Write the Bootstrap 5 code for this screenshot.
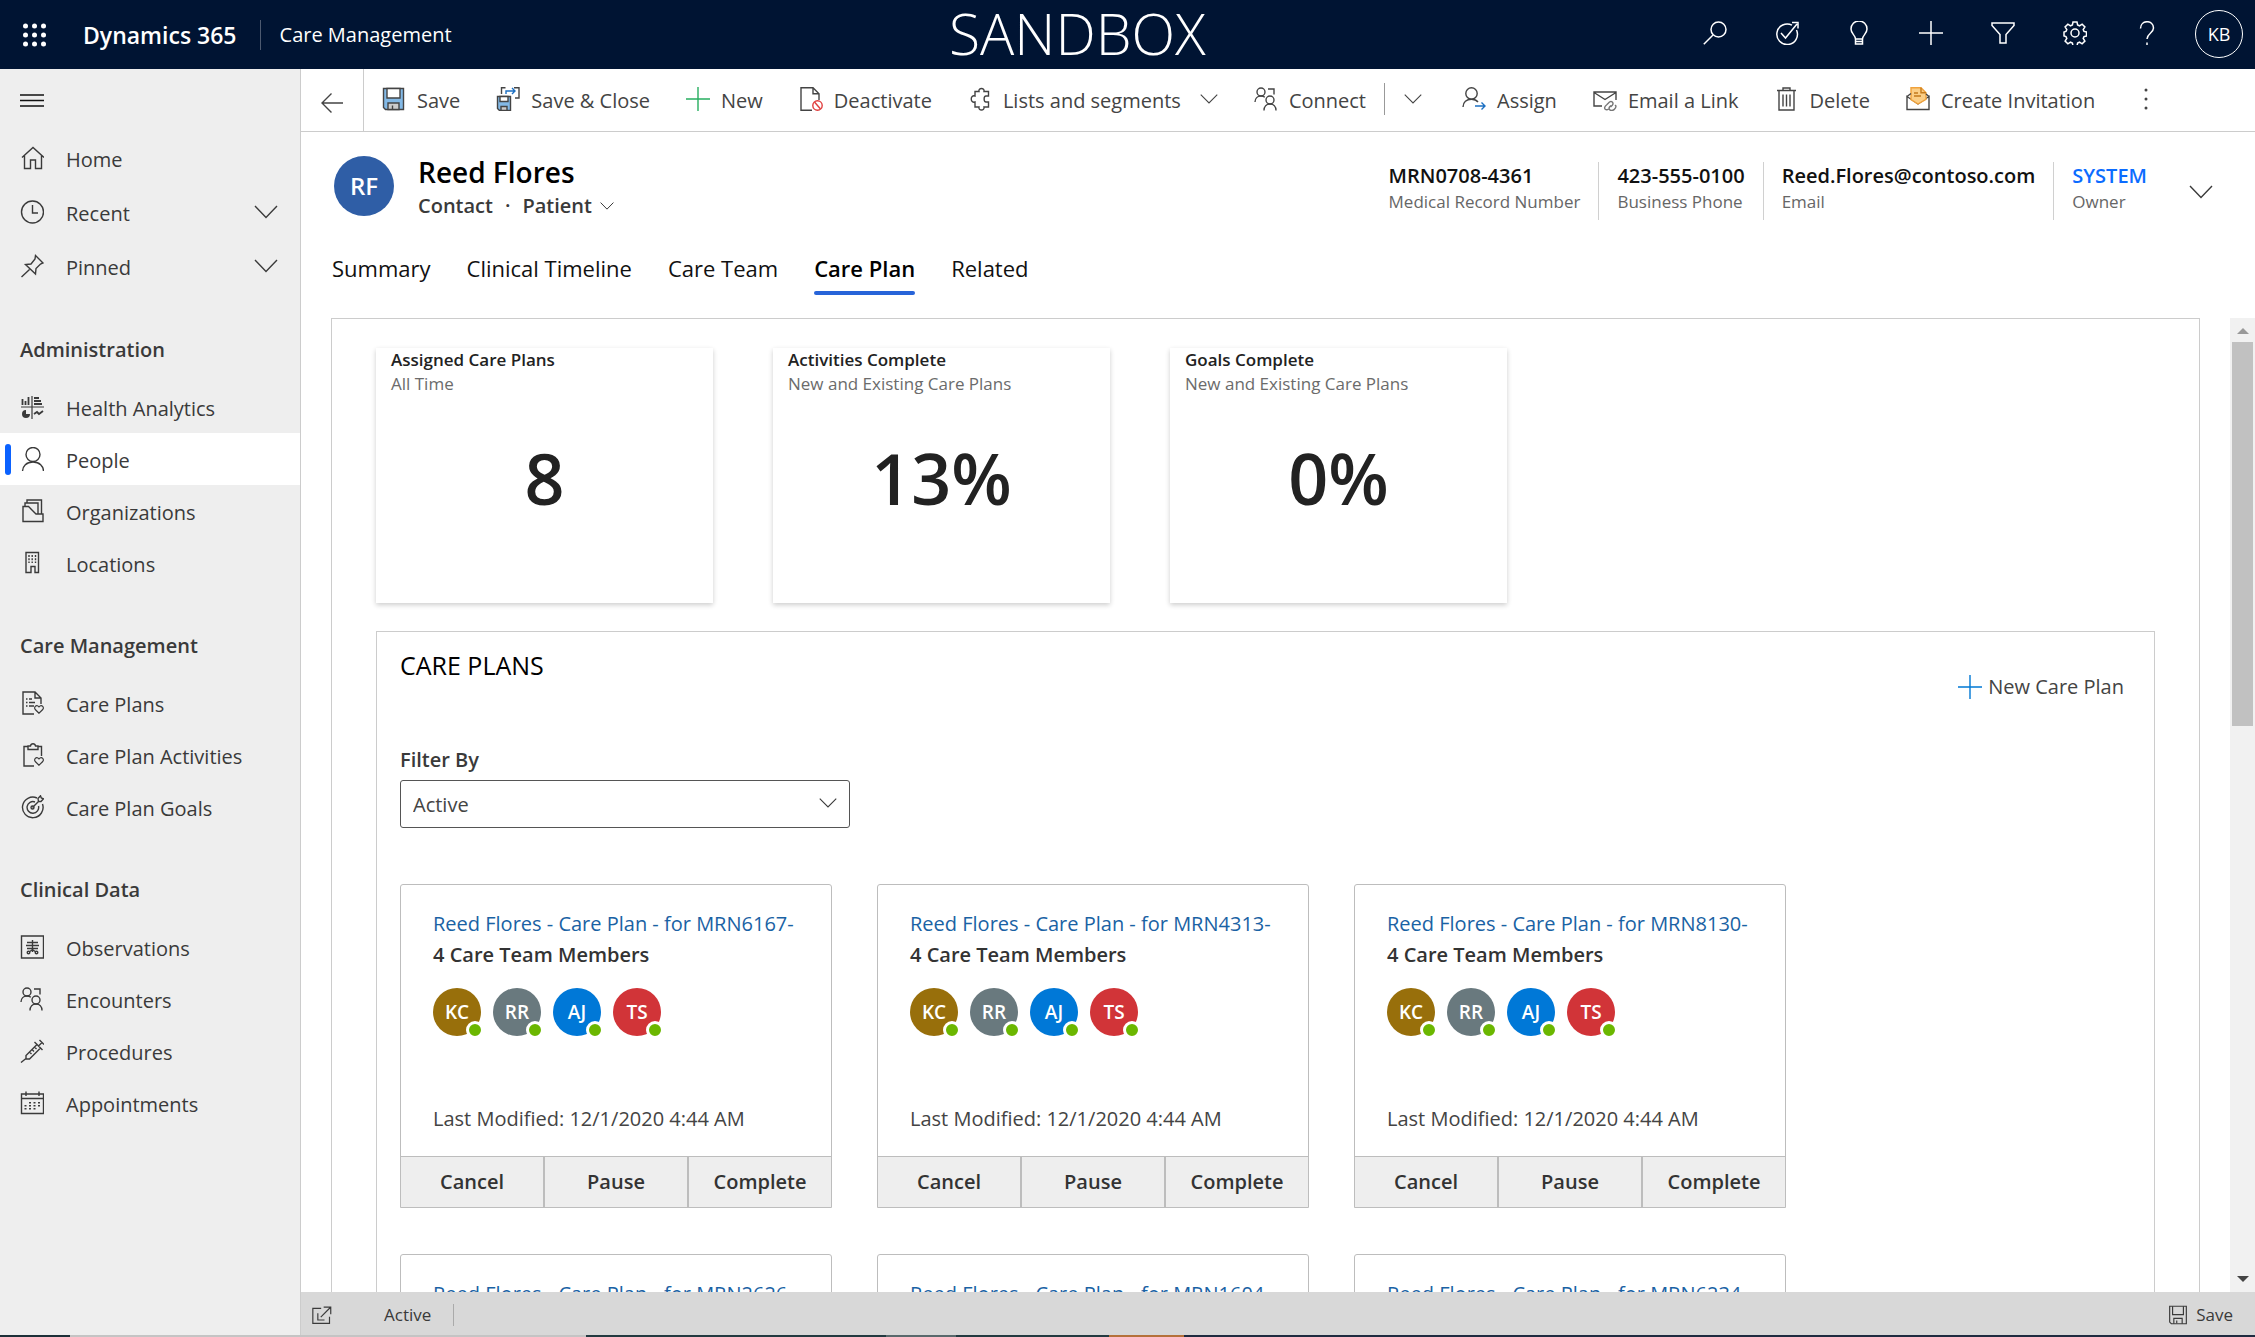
<!DOCTYPE html>
<html lang="en">
<head>
<meta charset="utf-8">
<meta name="viewport" content="width=device-width, initial-scale=1">
<title>Reed Flores - Dynamics 365 Care Management</title>
<link href="https://cdn.jsdelivr.net/npm/bootstrap@5.3.0/dist/css/bootstrap.min.css" rel="stylesheet">
<style>
:root { --navy: #001433; --ink: #3a3a3a; --line: #ccc; --accent: #2764d9; }
body { font-family: "Open Sans", "Noto Sans", sans-serif; font-size: 20px; line-height: 28px; color: var(--ink); background: #fff; }
a { color: inherit; text-decoration: none; }
button { background: none; border: 0; padding: 0; color: inherit; }
.ico { width: 24px; height: 24px; flex: none; fill: none; stroke: currentColor; stroke-width: 1.4; }
.ico-sm { width: 20px; height: 20px; }
.chev { width: 24px; height: 14px; flex: none; fill: none; stroke: currentColor; stroke-width: 1.4; }
.chev-sm { width: 18px; height: 10px; stroke-width: 1.1; }
.chev-xs { width: 14px; height: 8px; stroke-width: 1; }
.fine { font-size: 17px; }
.semi { font-weight: 600; }

.topbar { height: 69px; background: var(--navy); color: #fff; }
.topbar .ico { stroke-width: 1.5; }
.waffle { width: 83px; height: 66px; padding-left: 22px; }
.brand { font-size: 23px; }
.brand-rule { width: 1px; height: 30px; background: #4d5a70; margin: 0 19px 0 23px; }
.env { font-size: 57px; line-height: 66px; font-weight: 300; }
.tool { width: 72px; height: 62px; }
.me { width: 48px; height: 48px; border: 1px solid #fff; font-size: 18px; }

.side { width: 301px; background: #eee; border-right: 1px solid var(--line); }
.burger { height: 62px; padding-left: 20px; }
.side-link { height: 54px; padding: 0 22px 0 20px; gap: 22px; }
.side-group .side-link { height: 52px; }
.side-link .lbl { padding-top: 4px; }
.side-title { height: 88px; padding: 24px 0 0 20px; font-size: 20px; line-height: 66px; font-weight: 600; margin: 0; }
.side-link.on { background: #fff; position: relative; }
.side-link.on::before { content: ""; position: absolute; left: 5px; top: 11px; width: 6px; height: 31px; border-radius: 3px; background: #0b62ff; }

.cmds { height: 63px; border-bottom: 1px solid var(--line); color: #444; }
.back { width: 63px; border-right: 1px solid var(--line); }
.cmd-list { padding-left: 18px; }
.cmd { gap: 11px; margin-right: 36px; height: 60px; white-space: nowrap; }
.cmd span { padding-top: 3px; }
.cmd-rule { width: 1px; height: 32px; background: #999; margin: 0 19px 0 -18px; }
.cmd-drop { margin-right: 40px; }

.rec { padding: 24px 42px 0 33px; }
.face { width: 60px; height: 60px; background: #2f5ea6; color: #fff; font-size: 24px; }
.rec-name { font-size: 28px; line-height: 32px; color: #000; font-weight: 600; margin: 0 0 4px; }
.facts { margin-top: 6px; }
.fact { height: 58px; padding: 0 18px; border-left: 1px solid #d0d0d0; line-height: 25px; }
.fact:first-child { border-left: 0; }
.fact-v { font-size: 20px; font-weight: 600; color: #111; line-height: 27px; }
.fact-k { color: #666; }
.fact .sys { color: #0b6cff; }
.tabs { padding: 33px 0 0 31px; gap: 36px; font-size: 22px; line-height: 30px; color: #111; }
.tabs a { padding-bottom: 8px; border-bottom: 4px solid transparent; }
.tabs a.on { font-weight: 600; color: #000; position: relative; }
.tabs a.on::after { content: ""; position: absolute; left: 0; right: 0; bottom: -4px; height: 4px; border-radius: 2px; background: var(--accent); }

.pane { margin-top: 23px; }
.sheet { margin: 0 30px; padding: 29px 44px 0; border: 1px solid var(--line); }
.tiles { gap: 60px; }
.tile { width: 337px; height: 255px; padding: 0 15px; box-shadow: 0 2px 5px rgba(0,0,0,.2); line-height: 24px; color: #222; }
.tile .sub { color: #6b6b6b; }
.tile .num { font-size: 70px; line-height: 90px; padding-top: 37px; font-weight: 600; }
.plans { margin-top: 28px; padding: 15px 23px 0; border: 1px solid var(--line); }
.plans-head { height: 99px; }
.plans-head h2 { font-size: 25px; line-height: 36px; color: #000; font-weight: 400; margin: 0; }
.add { gap: 6px; margin: 20px 7px 0 0; height: 40px; color: #444; }
.pick { width: 450px; height: 48px; margin-top: 6px; padding: 2px 36px 0 12px; font-size: 20px; color: #444; border: 1px solid #555; border-radius: 3px; appearance: none; background: #fff; }
.pick-wrap { width: 450px; position: relative; }
.pick-wrap svg { position: absolute; right: 13px; top: 24px; pointer-events: none; }
.plan-grid { gap: 46px 45px; margin-top: 56px; }
.plan { width: 432px; height: 324px; border: 1px solid #bdbdbd; border-radius: 3px 3px 0 0; color: #333; }
.plan-body { padding: 23px 32px 0; line-height: 31px; white-space: nowrap; }
.plan-body a { color: #1a62a4; }
.who { gap: 12px; margin-top: 18px; }
.pal { width: 48px; height: 48px; color: #fff; font-size: 19px; font-weight: 600; position: relative; }
.pal::after { content: ""; position: absolute; right: -3px; bottom: -3px; width: 18px; height: 18px; border-radius: 50%; background: #6bb700; border: 3px solid #fff; }
.kc { background: #986f0b; } .rr { background: #69797e; } .aj { background: #0078d7; } .ts { background: #d13438; }
.when { margin-top: 69px; line-height: 28px; color: #444; }
.plan-acts { height: 51px; border-top: 1px solid #bdbdbd; background: #eee; }
.plan-acts button { flex: 1; font-weight: 600; }
.plan-acts button + button { border-left: 2px solid #bdbdbd; }
.rail { width: 25px; background: #f1f1f1; padding: 10px 2px; }
.rail svg { width: 12px; height: 6px; flex: none; }
.thumb { width: 21px; height: 384px; background: #c1c1c1; margin: 8px 0 auto; }
.status { height: 43px; background: #d8d8d8; padding: 2px 22px 0 11px; }
.status-rule { width: 1px; height: 22px; background: #aaa; margin-left: 22px; }
.edge { height: 2px; background: linear-gradient(90deg, #1d3038 0 3.1%, #c4c4c4 3.1% 26%, #233a40 26% 39.3%, #59696c 39.3% 42.4%, #233a40 42.4% 49.2%, #b5713a 49.2% 52.5%, #1f2b40 52.5%); }
</style>
<script src="https://cdn.jsdelivr.net/npm/bootstrap@5.3.0/dist/js/bootstrap.bundle.min.js"></script>
</head>
<body>
<svg class="d-none" xmlns="http://www.w3.org/2000/svg">
  <symbol id="chev" viewBox="0 0 24 14" preserveAspectRatio="none"><path d="M1 1l11 11.500L23 1" vector-effect="non-scaling-stroke"/></symbol>
  <symbol id="floppy" viewBox="0 0 24 24"><path d="M2 1.500h20v21H4l-2-2z"/><path d="M5.500 1.500v10h13v-10M7 22.500V16h10v6.500M10.500 22v-3.500"/></symbol>
  <symbol id="pair" viewBox="0 0 24 24"><circle cx="7" cy="5" r="4"/><path d="M1 15c0-3.500 2.500-6 6-6 1.500 0 2.800.4 3.800 1.200M14 2h6v5.500"/><circle cx="16" cy="13" r="4"/><path d="M10 23.500c0-4 2.500-6.500 6-6.500s6 2.500 6 6.500"/></symbol>
  <symbol id="plus" viewBox="0 0 24 24"><path d="M12 0v24M0 12h24"/></symbol>
  <symbol id="heart" viewBox="0 0 12 11"><path d="M6 10L1.500 5.500C-.5 3 2.500-.5 5 1.500l1 1 1-1C9.500-.5 12.500 3 10.500 5.500z"/></symbol>
</svg>
<div class="d-flex flex-column vh-100 overflow-hidden">
  <header class="topbar d-flex align-items-start flex-shrink-0">
    <button class="waffle text-start" aria-label="Apps"><svg class="ico" viewBox="0 0 24 24" style="fill:#fff;stroke:none"><circle cx="3.500" cy="3" r="2.500"/><circle cx="12.500" cy="3" r="2.500"/><circle cx="21.500" cy="3" r="2.500"/><circle cx="3.500" cy="12" r="2.500"/><circle cx="12.500" cy="12" r="2.500"/><circle cx="21.500" cy="12" r="2.500"/><circle cx="3.500" cy="21" r="2.500"/><circle cx="12.500" cy="21" r="2.500"/><circle cx="21.500" cy="21" r="2.500"/></svg></button>
    <div class="d-flex align-items-center h-100">
      <a href="#" class="brand semi">Dynamics 365</a><span class="brand-rule"></span><a href="#">Care Management</a>
    </div>
    <div class="env flex-grow-1 text-center ps-4">SANDBOX</div>
    <nav class="d-flex" aria-label="Tools">
      <button class="tool" aria-label="Search"><svg class="ico" viewBox="0 0 24 24"><circle cx="15.500" cy="8.500" r="7.500"/><path d="M10 14L.8 23.200"/></svg></button>
      <button class="tool" aria-label="Tasks"><svg class="ico" viewBox="0 0 24 24"><path d="M17 4.200A10.300 10.300 0 1 0 21.500 9M6 12l4.500 5L22 3M17 1.500h6v6" /></svg></button>
      <button class="tool" aria-label="Ideas"><svg class="ico" viewBox="0 0 24 24"><path d="M8.500 18c0-4-4.500-5-4.500-10a8 8 0 0 1 16 0c0 5-4.500 6-4.500 10zM8.500 18v5h7v-5M8.500 20.500h7"/></svg></button>
      <button class="tool" aria-label="Add"><svg class="ico"><use href="#plus"/></svg></button>
      <button class="tool" aria-label="Filter"><svg class="ico" viewBox="0 0 24 24"><path d="M1 2h22v2.500l-8 9V22H9v-8.500l-8-9z"/></svg></button>
      <button class="tool" aria-label="Settings"><svg class="ico" viewBox="0 0 24 24"><circle cx="12" cy="12" r="4"/><path d="M10 1h4l.6 3 1.900.8 2.600-1.700 2.800 2.800-1.700 2.600.8 1.900 2.500.6v4l-2.500.6-.8 1.900 1.700 2.600-2.800 2.800-2.600-1.700-1.900.8-.6 3h-4l-.6-3-1.900-.8-2.600 1.700-2.800-2.800 1.700-2.600-.8-1.900-2-.6v-4l2-.6.8-1.900-1.700-2.600 2.800-2.800 2.600 1.700 1.900-.8z"/></svg></button>
      <button class="tool" aria-label="Help"><svg class="ico" viewBox="0 0 24 24"><path d="M5.500 7.500c0-9 13-9 13-.5 0 5-6.500 5.500-6.500 11M12 21.500V24"/></svg></button>
      <div class="tool d-flex justify-content-center align-items-end pb-1"><button class="me rounded-circle">KB</button></div>
    </nav>
  </header>

  <div class="d-flex flex-grow-1" style="min-height:0">
    <nav class="side flex-shrink-0" aria-label="Site map">
      <button class="burger d-flex align-items-center w-100" aria-label="Collapse menu"><svg class="ico" viewBox="0 0 24 24" style="color:#111"><path d="M0 7h24M0 12.500h24M0 18h24"/></svg></button>
      <a href="#" class="side-link d-flex align-items-center"><svg class="ico" viewBox="0 0 24 24"><path d="M2 11.500L13 1.500l11 10M4.500 9.500V22.500h6V14h5v8.500h6V9.500"/></svg><span class="lbl">Home</span></a>
      <a href="#" class="side-link d-flex align-items-center"><svg class="ico" viewBox="0 0 24 24"><circle cx="12.500" cy="12" r="11"/><path d="M12.500 5v8H18"/></svg><span class="lbl flex-grow-1">Recent</span><svg class="chev"><use href="#chev"/></svg></a>
      <a href="#" class="side-link d-flex align-items-center"><svg class="ico" viewBox="0 0 24 24"><path d="M15.500 1.500l7.500 7.500-2.500 1-4.500 4.500-.5 5.500L5.500 10.500l5.500-.5 4-5zM9.500 15.500L1.500 23"/></svg><span class="lbl flex-grow-1">Pinned</span><svg class="chev"><use href="#chev"/></svg></a>
      <div class="side-group">
        <h2 class="side-title">Administration</h2>
        <a href="#" class="side-link d-flex align-items-center"><svg class="ico" viewBox="0 0 24 24"><path d="M1 12h23M12 1v23" stroke-width="1.200"/><path d="M2.500 10V4M5.500 10V6M8.500 10V2M14 3h5M14 6h7M14 9h8M14 19l3-2 2 2 4-3" stroke-width="1.800"/><path d="M6 15a4 4 0 1 0 4 4H6z" fill="currentColor" stroke="none"/></svg><span class="lbl">Health Analytics</span></a>
        <a href="#" class="side-link on d-flex align-items-center" aria-current="page"><svg class="ico" viewBox="0 0 24 24"><circle cx="13" cy="7.500" r="7"/><path d="M2.500 24.500c0-5.500 4-9.500 10.500-9.500s10.500 4 10.500 9.500"/></svg><span class="lbl">People</span></a>
        <a href="#" class="side-link d-flex align-items-center"><svg class="ico" viewBox="0 0 24 24"><path d="M3 22.500v-15h5.500l7.500 7.500h7v7.500zM5 7V4h13v11M7 4V1h14.500v14"/></svg><span class="lbl">Organizations</span></a>
        <a href="#" class="side-link d-flex align-items-center"><svg class="ico" viewBox="0 0 24 24"><path d="M6 1.500h12.500v20H15v-6h-4v6H6z"/><path d="M9 4v8M12.200 4v8M15.500 4v8" stroke-dasharray="2 1.200"/></svg><span class="lbl">Locations</span></a>
        <h2 class="side-title">Care Management</h2>
        <a href="#" class="side-link d-flex align-items-center"><svg class="ico" viewBox="0 0 24 24"><path d="M14 23H3V1h12l6 6v6M15 1v6h6M9 8h3M9 11.500h6M9 15h5M6 8h1.500M6 11.500h1.500M6 15h1.500"/><use href="#heart" x="14" y="13.500" width="10" height="10"/></svg><span class="lbl">Care Plans</span></a>
        <a href="#" class="side-link d-flex align-items-center"><svg class="ico" viewBox="0 0 24 24"><path d="M14 23H4V3.500h4.500M17.500 3.500h4V13M8 3h2.500c.5-3 4.500-3 5 0H18v3.500H8z"/><use href="#heart" x="14" y="13.500" width="10" height="10"/></svg><span class="lbl">Care Plan Activities</span></a>
        <a href="#" class="side-link d-flex align-items-center"><svg class="ico" viewBox="0 0 24 24"><path d="M17 3A10.300 10.300 0 1 0 22.500 9M15 7A5.800 5.800 0 1 0 18.500 11M12.500 12.500L18.500 6.500M18.500 6.500l-.5-3L20.500.8l.8 2.200 2.200.8-2.500 2.700z"/><circle cx="12.500" cy="12.500" r="1.500"/></svg><span class="lbl">Care Plan Goals</span></a>
        <h2 class="side-title">Clinical Data</h2>
        <a href="#" class="side-link d-flex align-items-center"><svg class="ico" viewBox="0 0 24 24"><path d="M1.500 1h22v22h-22z"/><path d="M12.500 5v12M7 7.500h11M6 10.500h13M7 13.500h11M12 15l-3 2M13 15l3 2"/><circle cx="8.500" cy="17.500" r="1.300"/><circle cx="16.500" cy="17.500" r="1.300"/></svg><span class="lbl">Observations</span></a>
        <a href="#" class="side-link d-flex align-items-center"><svg class="ico"><use href="#pair"/></svg><span class="lbl">Encounters</span></a>
        <a href="#" class="side-link d-flex align-items-center"><svg class="ico" viewBox="0 0 24 24"><path d="M1 23.500l5-4v-3L17 5.500l3.500 3.500L9.500 20H6M14.500 3l8 8M18.500 7l3.500-3.500M19.500 1l4.500 4.500M9.500 13l2 2M12 10.500l2 2M14.500 8l2 2"/></svg><span class="lbl">Procedures</span></a>
        <a href="#" class="side-link d-flex align-items-center"><svg class="ico" viewBox="0 0 24 24"><path d="M1.500 3h22v19.500h-22zM1.500 7.500h22M6 .5V5M19 .5V5"/><path d="M5.500 14v6M10 11v9M14.500 11v9M19 11v6" stroke-dasharray="1.500 1.500" stroke-width="2"/></svg><span class="lbl">Appointments</span></a>
      </div>
    </nav>

    <main class="d-flex flex-column flex-grow-1" style="min-width:0">
      <div class="cmds d-flex align-items-start flex-shrink-0">
        <button class="back align-self-stretch" aria-label="Back"><svg class="ico" viewBox="0 0 24 24"><path d="M23 13H2M11.500 3.500L2 13l9.500 9.500"/></svg></button>
        <div class="cmd-list d-flex align-items-center flex-grow-1">
          <button class="cmd d-flex align-items-center"><svg class="ico" viewBox="0 0 24 24"><path d="M1.500 1.500h20v21h-18l-2-2z" fill="#83b9e6"/><path d="M5 1.500h13v9.500H5z" fill="#fff"/><path d="M6 22.500V16h11v6.500z" fill="#ccc"/><path d="M10.500 22v-3.500"/></svg><span>Save</span></button>
          <button class="cmd d-flex align-items-center"><svg class="ico" viewBox="0 0 24 24"><path d="M1.500 9.500h13v14h-11l-2-2z" fill="#83b9e6"/><path d="M4 9.500h8v5H4z" fill="#fff"/><path d="M5 23.500v-4h6v4z" fill="#ccc"/><path d="M5.500 7V.8h4M18 .8h5V11h-4"/><path d="M10 7V4h9M16 1l3 3-3 3" stroke="#1b6fc2"/></svg><span>Save &amp; Close</span></button>
          <button class="cmd d-flex align-items-center"><svg class="ico" style="color:#27ae60"><use href="#plus"/></svg><span>New</span></button>
          <button class="cmd d-flex align-items-center"><svg class="ico" viewBox="0 0 24 24"><path d="M13 23.200H2V.8h12l6 6V13M14 .8v6h6"/><circle cx="18.500" cy="18.500" r="4.700" stroke="#e03c3c"/><path d="M15.500 15l6 7" stroke="#e03c3c"/></svg><span>Deactivate</span></button>
          <button class="cmd d-flex align-items-center"><svg class="ico" viewBox="0 0 24 24"><path d="M7 4.500h4c-1-4 6-4 5 0h4.500V9h-2.500c-2.500 0-2.500 6 0 6h2.500v5H16c1 4-6 4-5 0H7v-5c-5 1.500-5-7.500 0-6z"/></svg><span>Lists and segments</span><svg class="chev chev-sm ms-2"><use href="#chev"/></svg></button>
          <button class="cmd d-flex align-items-center"><svg class="ico"><use href="#pair"/></svg><span>Connect</span></button>
          <i class="cmd-rule"></i>
          <button class="cmd cmd-drop d-flex align-items-center" aria-label="More connect options"><svg class="chev chev-sm"><use href="#chev"/></svg></button>
          <button class="cmd d-flex align-items-center"><svg class="ico" viewBox="0 0 24 24"><circle cx="9.500" cy="6.500" r="5.700"/><path d="M1 20c0-5 3.500-7.800 8.500-7.800 3 0 5 .8 6.500 2.800"/><path d="M13 19h10M19.500 15.500L23 19l-3.500 3.500" stroke="#1b6fc2"/></svg><span>Assign</span></button>
          <button class="cmd d-flex align-items-center"><svg class="ico" viewBox="0 0 24 24"><path d="M9 19H1V5h22v8M1 5.500l11 7 11-7"/><path d="M14 17.500l2.500-2.500c2-1.500 4.500.5 3 3l-2 2M22 18l1 1c0 3-3 4.500-4.500 4.500-2 0-3-2-2-3.500l1.500-1.500M14 17.500c-2 1.500-3 3-2 4.500 1 1 2.500 1 3.500 0" stroke="#777"/></svg><span>Email a Link</span></button>
          <button class="cmd d-flex align-items-center"><svg class="ico" viewBox="0 0 24 24"><path d="M3 3.500h19M9 3V1h7v2M5 4v19h15V4M9 7.500v12M12.500 7.500v12M16 7.500v12"/></svg><span>Delete</span></button>
          <button class="cmd d-flex align-items-center"><svg class="ico" viewBox="0 0 24 24"><path d="M1 9.500L12 17l11-7.500V22.500H1z"/><path d="M5 .8h10l5 5v6.500L12 17l-7-4.500z" fill="#fbce86" stroke="#f0a23c"/><path d="M8 6h4M8 9h7M15 .8v5h5" stroke="#c47a1d"/><path d="M1 9.500l4-3M23 9.500l-3-2.500"/></svg><span>Create Invitation</span></button>
          <button class="cmd d-flex align-items-center" aria-label="More commands"><svg class="ico" viewBox="0 0 24 24" style="fill:currentColor;stroke:none"><circle cx="15" cy="3" r="1.500"/><circle cx="15" cy="12" r="1.500"/><circle cx="15" cy="21" r="1.500"/></svg></button>
        </div>
      </div>

      <div class="rec d-flex align-items-start flex-shrink-0">
        <div class="face rounded-circle d-flex align-items-center justify-content-center semi flex-shrink-0">RF</div>
        <div class="ps-4 me-auto">
          <h1 class="rec-name">Reed Flores</h1>
          <div class="d-flex align-items-center semi">Contact<span class="px-2 mx-1">·</span><button class="d-flex align-items-center semi">Patient<svg class="chev chev-xs ms-2"><use href="#chev"/></svg></button></div>
        </div>
        <div class="facts d-flex fine">
          <div class="fact"><div class="fact-v">MRN0708-4361</div><div class="fact-k">Medical Record Number</div></div>
          <div class="fact"><div class="fact-v">423-555-0100</div><div class="fact-k">Business Phone</div></div>
          <div class="fact"><div class="fact-v">Reed.Flores@contoso.com</div><div class="fact-k">Email</div></div>
          <div class="fact"><a href="#" class="fact-v sys d-block">SYSTEM</a><div class="fact-k">Owner</div></div>
          <button class="ps-4" aria-label="Expand header"><svg class="chev"><use href="#chev"/></svg></button>
        </div>
      </div>
      <nav class="tabs d-flex flex-shrink-0" aria-label="Form sections">
        <a href="#">Summary</a><a href="#">Clinical Timeline</a><a href="#">Care Team</a><a href="#" class="on" aria-current="true">Care Plan</a><a href="#">Related</a>
      </nav>

      <div class="pane d-flex flex-grow-1 overflow-hidden">
        <div class="flex-grow-1 overflow-hidden">
          <div class="sheet">
            <div class="tiles d-flex">
              <section class="tile fine"><div class="semi">Assigned Care Plans</div><div class="sub">All Time</div><div class="num text-center">8</div></section>
              <section class="tile fine"><div class="semi">Activities Complete</div><div class="sub">New and Existing Care Plans</div><div class="num text-center">13%</div></section>
              <section class="tile fine"><div class="semi">Goals Complete</div><div class="sub">New and Existing Care Plans</div><div class="num text-center">0%</div></section>
            </div>
            <section class="plans">
              <div class="plans-head d-flex justify-content-between align-items-start">
                <h2>CARE PLANS</h2>
                <button class="add d-flex align-items-center"><svg class="ico" style="color:#0078d4"><use href="#plus"/></svg><span>New Care Plan</span></button>
              </div>
              <label for="filter" class="semi d-block">Filter By</label>
              <div class="pick-wrap"><select id="filter" class="pick"><option>Active</option><option>Completed</option></select><svg class="chev chev-sm"><use href="#chev"/></svg></div>
              <div class="plan-grid d-flex flex-wrap">
                <article class="plan d-flex flex-column"><div class="plan-body"><a href="#">Reed Flores - Care Plan - for MRN6167-</a><div class="semi">4 Care Team Members</div>
                  <div class="who d-flex"><span class="pal kc rounded-circle d-flex align-items-center justify-content-center">KC</span><span class="pal rr rounded-circle d-flex align-items-center justify-content-center">RR</span><span class="pal aj rounded-circle d-flex align-items-center justify-content-center">AJ</span><span class="pal ts rounded-circle d-flex align-items-center justify-content-center">TS</span></div>
                  <div class="when">Last Modified: 12/1/2020 4:44 AM</div></div>
                  <div class="plan-acts d-flex mt-auto"><button>Cancel</button><button>Pause</button><button>Complete</button></div></article>
                <article class="plan d-flex flex-column"><div class="plan-body"><a href="#">Reed Flores - Care Plan - for MRN4313-</a><div class="semi">4 Care Team Members</div>
                  <div class="who d-flex"><span class="pal kc rounded-circle d-flex align-items-center justify-content-center">KC</span><span class="pal rr rounded-circle d-flex align-items-center justify-content-center">RR</span><span class="pal aj rounded-circle d-flex align-items-center justify-content-center">AJ</span><span class="pal ts rounded-circle d-flex align-items-center justify-content-center">TS</span></div>
                  <div class="when">Last Modified: 12/1/2020 4:44 AM</div></div>
                  <div class="plan-acts d-flex mt-auto"><button>Cancel</button><button>Pause</button><button>Complete</button></div></article>
                <article class="plan d-flex flex-column"><div class="plan-body"><a href="#">Reed Flores - Care Plan - for MRN8130-</a><div class="semi">4 Care Team Members</div>
                  <div class="who d-flex"><span class="pal kc rounded-circle d-flex align-items-center justify-content-center">KC</span><span class="pal rr rounded-circle d-flex align-items-center justify-content-center">RR</span><span class="pal aj rounded-circle d-flex align-items-center justify-content-center">AJ</span><span class="pal ts rounded-circle d-flex align-items-center justify-content-center">TS</span></div>
                  <div class="when">Last Modified: 12/1/2020 4:44 AM</div></div>
                  <div class="plan-acts d-flex mt-auto"><button>Cancel</button><button>Pause</button><button>Complete</button></div></article>
                <article class="plan"><div class="plan-body"><a href="#">Reed Flores - Care Plan - for MRN2626-</a></div></article>
                <article class="plan"><div class="plan-body"><a href="#">Reed Flores - Care Plan - for MRN1604-</a></div></article>
                <article class="plan"><div class="plan-body"><a href="#">Reed Flores - Care Plan - for MRN6234-</a></div></article>
              </div>
            </section>
          </div>
        </div>
        <div class="rail d-flex flex-column align-items-center flex-shrink-0" aria-hidden="true">
          <svg viewBox="0 0 12 6"><path d="M0 6l6-6 6 6z" fill="#999"/></svg>
          <div class="thumb"></div>
          <svg viewBox="0 0 12 6"><path d="M0 0l6 6 6-6z" fill="#444"/></svg>
        </div>
      </div>

      <footer class="status d-flex align-items-center flex-shrink-0 fine">
        <button aria-label="Open in new window" class="d-flex me-5"><svg class="ico ico-sm" viewBox="0 0 24 24"><path d="M11 4H1v18h20v-8M14 2.500h8.500V11M22 3L10.500 14.500M7 10v8h8"/></svg></button>
        <span class="ms-1">Active</span><span class="status-rule"></span>
        <button class="d-flex align-items-center ms-auto gap-2"><svg class="ico ico-sm"><use href="#floppy"/></svg>Save</button>
      </footer>
    </main>
  </div>
  <div class="edge flex-shrink-0"></div>
</div>
</body>
</html>
